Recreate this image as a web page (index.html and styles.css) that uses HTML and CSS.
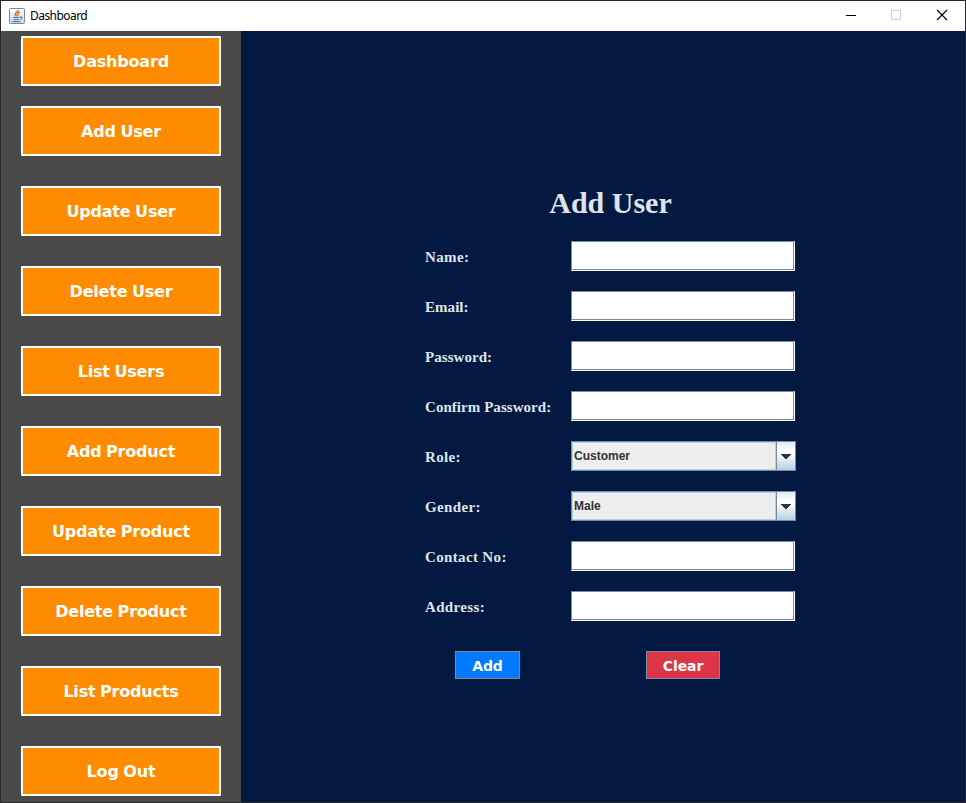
FILE: index.html
```html
<!DOCTYPE html>
<html lang="en">
<head>
<meta charset="utf-8">
<title>Dashboard</title>
<link rel="stylesheet" href="styles.css">
</head>
<body>
<div class="window">
  <header class="titlebar">
    <svg class="app-icon" width="16" height="16" viewBox="0 0 16 16">
      <defs><linearGradient id="tile" x2="0" y2="1"><stop stop-color="#fff"/><stop offset="1" stop-color="#c5d3df"/></linearGradient></defs>
      <rect x=".5" y=".5" width="15" height="15" rx="1" fill="url(#tile)" stroke="#6e8ca5"/>
      <path d="M9 2c.8 2-4 3-2.500 5 .5.8 1 1 1 1.500M11 4C8 5 8.500 6.500 9 8" fill="none" stroke="#e8761d" stroke-width="1.600"/>
      <path d="M4 9.500h6.500M5 11.500h5M3.500 13.500h8M11 9c2.500-.8 2.500 1.500 .3 2.200" fill="none" stroke="#557a9b" stroke-width="1.100"/>
    </svg>
    <span class="title">Dashboard</span>
    <div class="controls">
      <svg width="46" height="30" viewBox="0 0 46 30" shape-rendering="crispEdges"><path d="M17 14.500h10" stroke="#000"/></svg>
      <svg width="46" height="30" viewBox="0 0 46 30" shape-rendering="crispEdges"><rect x="16.500" y="9.500" width="9" height="9" fill="none" stroke="#ccc"/></svg>
      <svg width="46" height="30" viewBox="0 0 46 30"><path d="M16 9l10 10M26 9L16 19" stroke="#000" stroke-width="1.100"/></svg>
    </div>
  </header>
  <div class="body">
    <nav class="sidebar">
      <button class="nav first"><span>Dashboard</span></button>
      <button class="nav"><span>Add User</span></button>
      <button class="nav"><span>Update User</span></button>
      <button class="nav"><span>Delete User</span></button>
      <button class="nav"><span>List Users</span></button>
      <button class="nav"><span>Add Product</span></button>
      <button class="nav"><span>Update Product</span></button>
      <button class="nav"><span>Delete Product</span></button>
      <button class="nav"><span>List Products</span></button>
      <button class="nav"><span>Log Out</span></button>
    </nav>
    <main class="content">
      <h1>Add User</h1>
      <form class="form">
        <label class="loose">Name:</label><div class="field"></div>
        <label>Email:</label><div class="field"></div>
        <label>Password:</label><div class="field"></div>
        <label>Confirm Password:</label><div class="field"></div>
        <label class="loose">Role:</label>
        <div class="combo"><span class="value">Customer</span><span class="arrow"><svg width="10" height="5" viewBox="0 0 10 5" shape-rendering="crispEdges"><path d="M0 0h10v1H9v1H8v1H7v1H6v1H4V4H3V3H2V2H1V1H0z" fill="#333"/></svg></span></div>
        <label class="loose">Gender:</label>
        <div class="combo"><span class="value">Male</span><span class="arrow"><svg width="10" height="5" viewBox="0 0 10 5" shape-rendering="crispEdges"><path d="M0 0h10v1H9v1H8v1H7v1H6v1H4V4H3V3H2V2H1V1H0z" fill="#333"/></svg></span></div>
        <label class="loose">Contact No:</label><div class="field"></div>
        <label class="loose">Address:</label><div class="field"></div>
      </form>
      <div class="actions">
        <button class="action add">Add</button>
        <button class="action clear">Clear</button>
      </div>
    </main>
  </div>
</div>
</body>
</html>
```
FILE: styles.css
```css
* { box-sizing: border-box; }
body { margin: 0; }
button { margin: 0; padding: 0; display: block; border-radius: 0; }
.window {
  width: 966px; height: 803px;
  border: 1px solid #27272c;
  display: flex; flex-direction: column;
  overflow: hidden;
}
.titlebar {
  height: 30px; flex: none;
  background: #fff;
  display: flex; align-items: center;
  padding-left: 8px;
}
.app-icon { margin-top: -1px; }
.title {
  margin-left: 5px;
  font: 12px/16px "Noto Sans", sans-serif;
  letter-spacing: -0.55px;
  color: #000;
}
.controls { margin-left: auto; margin-right: -2px; display: flex; }
.body { flex: 1; display: flex; min-height: 0; }
.sidebar {
  width: 240px; flex: none;
  background: #4a4a4a;
  padding: 5px 20px 0;
  display: flex; flex-direction: column; gap: 30px;
}
.nav {
  height: 50px; flex: none;
  background: #ff8c00;
  border: 2px solid #fff;
  border-radius: 1px;
  color: #fff;
  font: bold 16px/20px "DejaVu Sans", sans-serif;
  letter-spacing: -0.2px;
  word-spacing: -0.7px;
  padding-top: 2px;
}
.nav.first { margin-bottom: -10px; }
.content { flex: 1; background: #041942; padding: 153px 0 0 184px; }
h1 {
  margin: 0; width: 371px; height: 38px;
  text-align: center;
  font: bold 30px/38px "Liberation Serif", serif;
  color: #dee4ea;
}
.form {
  margin: 19px 0 0;
  display: grid;
  grid-template-columns: 146px 225px;
  grid-auto-rows: 30px;
  row-gap: 20px;
}
.form label {
  font: bold 15px/32px "Liberation Serif", serif;
  letter-spacing: 0.05px;
  color: #dee4ea;
  white-space: nowrap;
}
.form .loose { letter-spacing: 0.35px; }
.field {
  width: 224px;
  border: 1px solid;
  border-color: #7a8a99 #fff #fff #7a8a99;
  background: #fff;
  box-shadow: inset -1px -1px #7a8a99;
}
.combo {
  display: flex;
  border: 1px solid #7a8a99;
  background: #eee;
}
.value {
  flex: 1;
  border: 1px solid #b8cfe5;
  padding-left: 1px;
  font: bold 12px/26px "Liberation Sans", sans-serif;
  color: #333;
}
.arrow {
  width: 19px;
  border-left: 1px solid #7a8a99;
  background: linear-gradient(#dde8f3, #fff 30%, #fff 40%, #b8cfe5);
  display: flex; align-items: center; justify-content: center;
}
.actions { display: flex; margin: 30px 0 0 30px; gap: 126px; }
.action {
  height: 28px;
  border: 1px solid #7a8a99;
  color: #fff;
  font: bold 14px/20px "DejaVu Sans", sans-serif;
  letter-spacing: -0.1px;
  padding-top: 2px;
}
.add { width: 65px; background: #007bff; }
.clear { width: 74px; background: #dc3545; }
```
